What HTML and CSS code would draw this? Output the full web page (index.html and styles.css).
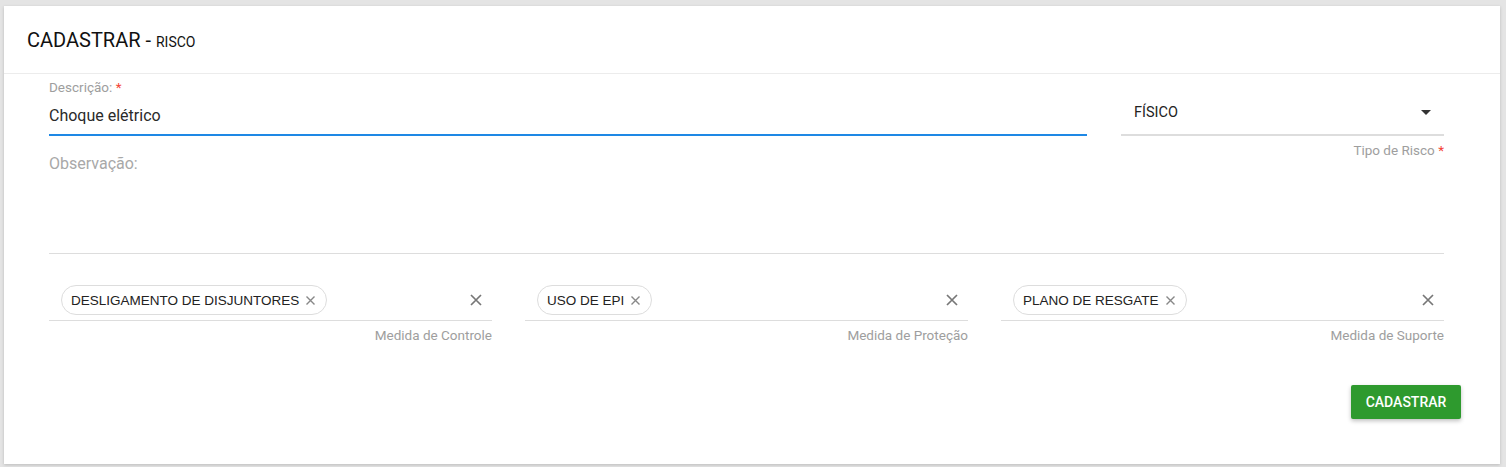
FILE: index.html
```html
<!DOCTYPE html>
<html lang="pt-BR">
<head>
  <meta charset="UTF-8" />
  <meta name="viewport" content="width=device-width, initial-scale=1.0"/>
  <title>Cadastrar - Risco</title>
  <link rel="stylesheet" href="styles.css">
</head>
<body>

<div class="card">
  <div class="card-header">
    <h2>CADASTRAR - <small>RISCO</small></h2>
  </div>

  <div class="card-body">
    <!-- Descricao + Tipo -->
    <div class="row-top">
      <div class="field">
        <label class="float-label">Descrição: <span class="req">*</span></label>
        <div class="input active">Choque elétrico</div>
      </div>
      <div class="field select-field">
        <div class="select">
          <span>FÍSICO</span>
          <svg class="caret" width="10" height="5" viewBox="0 0 10 5"><polygon points="0,0 10,0 5,5" fill="#333"/></svg>
        </div>
        <div class="helper">Tipo de Risco <span class="req">*</span></div>
      </div>
    </div>

    <!-- Observacao -->
    <div class="textarea">
      <span class="placeholder">Observação:</span>
    </div>

    <!-- Medidas -->
    <div class="row-chips">
      <div class="field">
        <div class="chips-input">
          <span class="chip">DESLIGAMENTO DE DISJUNTORES
            <svg width="11" height="11" viewBox="0 0 11 11"><path d="M1.5 1.5 L9.5 9.5 M9.5 1.5 L1.5 9.5" stroke="#888" stroke-width="1.4"/></svg>
          </span>
          <svg class="clear" width="12" height="12" viewBox="0 0 12 12"><path d="M1 1 L11 11 M11 1 L1 11" stroke="#777" stroke-width="1.7"/></svg>
        </div>
        <div class="helper">Medida de Controle</div>
      </div>
      <div class="field">
        <div class="chips-input">
          <span class="chip">USO DE EPI
            <svg width="11" height="11" viewBox="0 0 11 11"><path d="M1.5 1.5 L9.5 9.5 M9.5 1.5 L1.5 9.5" stroke="#888" stroke-width="1.4"/></svg>
          </span>
          <svg class="clear" width="12" height="12" viewBox="0 0 12 12"><path d="M1 1 L11 11 M11 1 L1 11" stroke="#777" stroke-width="1.7"/></svg>
        </div>
        <div class="helper">Medida de Proteção</div>
      </div>
      <div class="field">
        <div class="chips-input">
          <span class="chip">PLANO DE RESGATE
            <svg width="11" height="11" viewBox="0 0 11 11"><path d="M1.5 1.5 L9.5 9.5 M9.5 1.5 L1.5 9.5" stroke="#888" stroke-width="1.4"/></svg>
          </span>
          <svg class="clear" width="12" height="12" viewBox="0 0 12 12"><path d="M1 1 L11 11 M11 1 L1 11" stroke="#777" stroke-width="1.7"/></svg>
        </div>
        <div class="helper">Medida de Suporte</div>
      </div>
    </div>
  </div>

  <div class="card-actions">
    <button class="btn-save">CADASTRAR</button>
  </div>
</div>

</body>
</html>
```

FILE: styles.css
```css
body {
  margin: 0;
  font-family: Roboto, 'Liberation Sans', sans-serif;
  background: #e4e4e4;
  padding: 6px 6px 3px 4px;
}

.card {
  background: #fff;
  height: 458px;
  box-shadow: 0 1px 3px rgba(0, 0, 0, 0.18);
  display: flex;
  flex-direction: column;
}

.card-header {
  height: 67px;
  padding: 0 23px;
  display: flex;
  align-items: center;
  border-bottom: 1px solid #ececec;
}

.card-header h2 {
  margin: 0;
  font-size: 20px;
  font-weight: 400;
  color: #111;
}

.card-header small {
  font-size: 14px;
}

.card-body {
  padding: 5px 56px 0 45px;
}

.row-top {
  display: grid;
  grid-template-columns: 1fr 323px;
  gap: 34px;
}

.float-label {
  display: block;
  font-size: 13.5px;
  line-height: 16px;
  color: #9e9e9e;
}

.req {
  color: #f44336;
}

.input {
  height: 39px;
  line-height: 41px;
  font-size: 16px;
  color: #2a2a2a;
  border-bottom: 2px solid #ddd;
}

.input.active {
  border-bottom-color: #1e88e5;
}

.select-field {
  padding-top: 16px;
}

.select {
  height: 41px;
  border-bottom: 2px solid #ddd;
  display: flex;
  align-items: center;
  justify-content: space-between;
  padding: 0 13px 5px 13px;
  box-sizing: border-box;
  font-size: 14.5px;
  color: #222;
}

.helper {
  font-size: 13.5px;
  line-height: 16px;
  color: #9e9e9e;
  text-align: right;
  margin-top: 6px;
}

.textarea {
  height: 95px;
  border-bottom: 1px solid #ddd;
}

.placeholder {
  display: block;
  font-size: 16px;
  line-height: 12px;
  color: #a8a8a8;
}

.row-chips {
  display: grid;
  grid-template-columns: repeat(3, 1fr);
  gap: 33px;
}

.chips-input {
  height: 67px;
  border-bottom: 1px solid #ddd;
  display: flex;
  align-items: flex-end;
  justify-content: space-between;
  padding: 0 10px 5px 12px;
  box-sizing: border-box;
}

.chip {
  height: 30px;
  box-sizing: border-box;
  border: 1px solid #ddd;
  border-radius: 15px;
  padding: 0 10px 0 9px;
  display: inline-flex;
  align-items: center;
  gap: 6px;
  font-family: 'Liberation Sans', Arial, sans-serif;
  font-size: 13.5px;
  color: #222;
}

.chips-input .clear {
  margin-bottom: 9px;
}

.row-chips .helper {
  margin-top: 6px;
}

.card-actions {
  display: flex;
  justify-content: flex-end;
  padding: 42px 39px 0 0;
}

.btn-save {
  width: 110px;
  height: 34px;
  border: none;
  border-radius: 2px;
  background: #2e9a2e;
  color: #fff;
  font-family: inherit;
  font-size: 14px;
  font-weight: 500;
  box-shadow: 0 2px 4px rgba(0, 0, 0, 0.25);
  cursor: pointer;
}
```
